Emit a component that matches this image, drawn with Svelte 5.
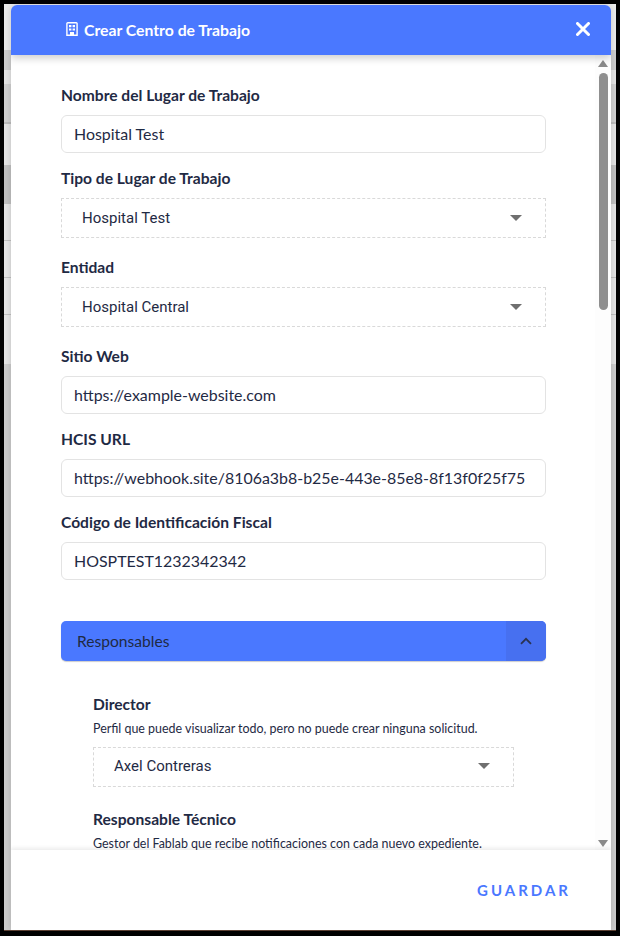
<script>
  const fields1 = [
    { label: 'Nombre del Lugar de Trabajo', value: 'Hospital Test', type: 'input' },
    { label: 'Tipo de Lugar de Trabajo', value: 'Hospital Test', type: 'select' },
    { label: 'Entidad', value: 'Hospital Central', type: 'select' },
    { label: 'Sitio Web', value: 'https://example-website.com', type: 'input' },
    { label: 'HCIS URL', value: 'https://webhook.site/8106a3b8-b25e-443e-85e8-8f13f0f25f75', type: 'input' },
    { label: 'Código de Identificación Fiscal', value: 'HOSPTEST1232342342', type: 'input' }
  ];
</script>

<div class="screen">
  <div class="backdrop">
    <div class="dialog">
      <header class="head">
        <div class="title">
          <svg class="bld" viewBox="0 0 12 14" width="12" height="14" aria-hidden="true">
            <path fill="none" stroke="#fff" stroke-width="1.4" d="M.9 13.3V1.6c0-.5.4-.9.9-.9h8.4c.5 0 .9.4.9.9v11.7z"/>
            <path fill="#fff" d="M3 3h2.4v2.2H3zM6.6 3H9v2.2H6.6zM3 6.4h2.4v2.2H3zM6.6 6.4H9v2.2H6.6zM4 10h4v3.5H4z"/>
          </svg>
          <span>Crear Centro de Trabajo</span>
        </div>
        <svg class="close" viewBox="0 0 14 14" width="14" height="14" aria-hidden="true">
          <path stroke="#fff" stroke-width="3" stroke-linecap="round" d="M1.5 1.5l11 11M12.5 1.5l-11 11"/>
        </svg>
      </header>

      <div class="body">
        <div class="scroll">
          {#each fields1 as f}
            <div class="field" class:sel={f.type === 'select'}>
              <div class="label">{f.label}</div>
              {#if f.type === 'input'}
                <div class="input">{f.value}</div>
              {:else}
                <div class="select"><span>{f.value}</span><i class="caret"></i></div>
              {/if}
            </div>
          {/each}

          <div class="acc">
            <span>Responsables</span>
            <div class="acc-btn">
              <svg viewBox="0 0 12 8" width="12" height="8" aria-hidden="true">
                <path fill="none" stroke="#2a3352" stroke-width="1.8" d="M1 6.8l5-5 5 5"/>
              </svg>
            </div>
          </div>

          <div class="sub">
            <div class="sub-label">Director</div>
            <div class="hint">Perfil que puede visualizar todo, pero no puede crear ninguna solicitud.</div>
            <div class="select small"><span>Axel Contreras</span><i class="caret"></i></div>
            <div class="sub-label second">Responsable Técnico</div>
            <div class="hint">Gestor del Fablab que recibe notificaciones con cada nuevo expediente.</div>
          </div>
        </div>

        <div class="bar">
          <i class="arrow up"></i>
          <div class="track"><div class="thumb"></div></div>
          <i class="arrow down"></i>
        </div>
      </div>

      <footer class="foot"><span class="save">GUARDAR</span></footer>
    </div>
  </div>
</div>

<style>
  :global(body) { margin: 0; background: #000; }
  .screen { width: 620px; height: 936px; box-sizing: border-box; padding: 4px; background: #000; font-family: Lato, sans-serif; color: #1f2a44; overflow: hidden; }
  .backdrop {
    height: 927px; padding: 1px 5px 0 7px; box-sizing: border-box; overflow: hidden;
    border-bottom: 1px solid #5c4033;
    background: linear-gradient(to bottom,
      #ececec 0 46px, #cdcdcd 46px 66px, #e4e4e4 66px 80px, #d0d0d0 80px 118px, #bcbcbc 118px 120px,
      #e4e4e4 120px 161px, #c0c0c0 161px 200px, #e4e4e4 200px 236px, #c0c0c0 236px 237px,
      #e4e4e4 237px 273px, #c0c0c0 273px 274px, #e4e4e4 274px 310px, #c0c0c0 310px 311px,
      #e4e4e4 311px 360px, #cccccc 360px);
  }
  .dialog { width: 600px; height: 925px; background: #fff; display: flex; flex-direction: column; border-radius: 6px 6px 0 0; overflow: hidden; box-shadow: 0 0 7px rgba(0,0,0,.16); }
  .head { flex: none; height: 50px; box-sizing: border-box; background: #4a78ff; color: #fff; display: flex; align-items: center; justify-content: space-between; padding: 0 21px 2px 55px; box-shadow: 0 3px 8px rgba(0,0,0,.2); position: relative; z-index: 2; }
  .title { display: flex; align-items: center; gap: 6px; font-weight: 700; font-size: 15.75px; }
  .body { flex: 1; min-height: 0; display: flex; position: relative; }
  .scroll { flex: 1; min-width: 0; overflow: hidden; padding: 31px 0 0 50px; }
  .field { width: 485px; margin-bottom: 16px; }
  .field.sel { margin-bottom: 20px; }
  .label { font-weight: 700; font-size: 15.6px; line-height: 19px; margin-bottom: 10px; }
  .input { box-sizing: border-box; height: 38px; border: 1px solid #e3e3e3; border-radius: 6px; padding: 0 12px; line-height: 36px; font-size: 15.95px; white-space: nowrap; }
  .select { box-sizing: border-box; height: 40px; border: 1px dashed #d9d9d9; display: flex; align-items: center; justify-content: space-between; padding: 0 23px 0 20px; font-family: Roboto, sans-serif; font-size: 15px; }
  .select.small { padding-bottom: 2px; }
  .caret { width: 0; height: 0; border-left: 6px solid transparent; border-right: 6px solid transparent; border-top: 6px solid #6f6f6f; }
  .acc { width: 485px; height: 40px; margin-top: 41px; box-sizing: border-box; background: #4a78ff; border-radius: 5px; display: flex; align-items: center; justify-content: space-between; padding-left: 16px; font-size: 15.6px; box-shadow: 0 1px 1px rgba(0,0,0,.2); overflow: hidden; }
  .acc-btn { width: 40px; height: 40px; background: #4770f0; display: flex; align-items: center; justify-content: center; }
  .sub { padding: 34px 0 0 32px; width: 421px; }
  .sub-label { font-weight: 700; font-size: 15.6px; line-height: 18px; margin-bottom: 8px; }
  .sub-label.second { margin-top: 23px; }
  .hint { font-size: 12.45px; line-height: 16px; white-space: nowrap; margin-bottom: 9px; }
  .hint + .select { margin-top: 10px; }
  .bar { position: absolute; top: 0; right: 0; width: 16px; height: 100%; display: flex; flex-direction: column; align-items: center; background: #fdfdfd; }
  .track { flex: 1; width: 100%; padding-top: 6px; box-sizing: border-box; }
  .thumb { width: 9px; height: 237px; margin: 0 auto; background: #8f8f8f; border-radius: 5px; }
  .arrow { width: 0; height: 0; border-left: 5px solid transparent; border-right: 5px solid transparent; }
  .arrow.up { border-bottom: 7px solid #8a8a8a; margin-top: 5px; }
  .arrow.down { border-top: 7px solid #8a8a8a; margin-bottom: 3px; }
  .foot { flex: none; height: 80px; background: #fff; display: flex; align-items: center; justify-content: flex-end; padding-right: 40px; box-shadow: 0 -2px 4px rgba(0,0,0,.08); position: relative; z-index: 2; }
  .save { color: #4a78ff; font-weight: 700; font-size: 15px; letter-spacing: 3px; }
</style>
